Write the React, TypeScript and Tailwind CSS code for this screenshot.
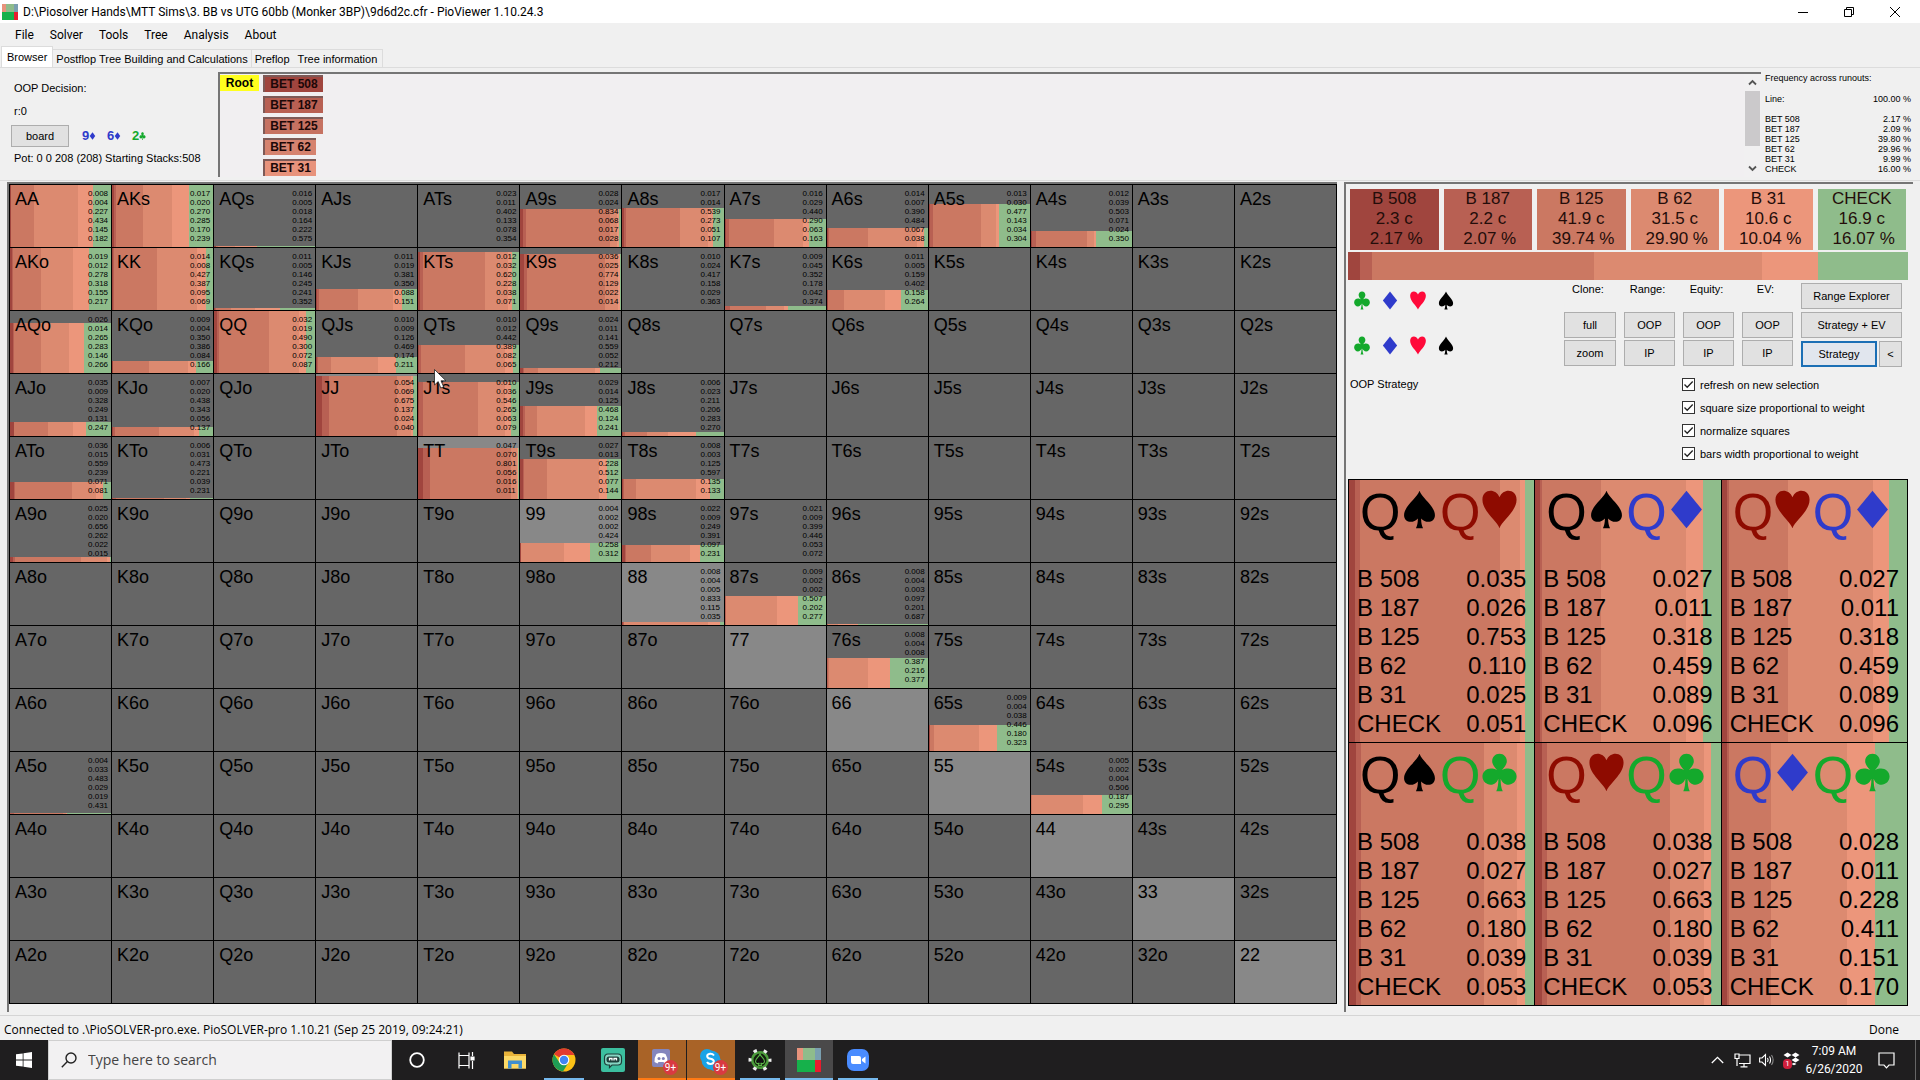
import React from "react";

type Suit = "s" | "h" | "d" | "c";

const RANKS = ["A", "K", "Q", "J", "T", "9", "8", "7", "6", "5", "4", "3", "2"];

const ACTIONS = [
  { name: "B 508", combos: "2.3 c", pct: "2.17 %", bg: "bg-[#a0453e]" },
  { name: "B 187", combos: "2.2 c", pct: "2.07 %", bg: "bg-[#b86053]" },
  { name: "B 125", combos: "41.9 c", pct: "39.74 %", bg: "bg-[#cb7862]" },
  { name: "B 62", combos: "31.5 c", pct: "29.90 %", bg: "bg-[#dc8a70]" },
  { name: "B 31", combos: "10.6 c", pct: "10.04 %", bg: "bg-[#ec967b]" },
  { name: "CHECK", combos: "16.9 c", pct: "16.07 %", bg: "bg-[#8fbc8b]" },
];

/* hand: [bar height in percent of the square, frequencies per action] */
const HANDS: Record<string, [number, string]> = {
  AA: [100, "0.008 0.004 0.227 0.434 0.145 0.182"],
  AKs: [100, "0.017 0.020 0.270 0.285 0.170 0.239"],
  AQs: [2, "0.016 0.005 0.018 0.164 0.222 0.575"],
  ATs: [0, "0.023 0.011 0.402 0.133 0.078 0.354"],
  A9s: [62, "0.028 0.024 0.834 0.068 0.017 0.028"],
  A8s: [63, "0.017 0.014 0.539 0.273 0.051 0.107"],
  A7s: [45, "0.016 0.029 0.440 0.290 0.063 0.163"],
  A6s: [31, "0.014 0.007 0.390 0.484 0.067 0.038"],
  A5s: [69, "0.013 0.030 0.477 0.143 0.034 0.304"],
  A4s: [26, "0.012 0.039 0.503 0.071 0.024 0.350"],
  AKo: [100, "0.019 0.012 0.278 0.318 0.155 0.217"],
  KK: [100, "0.014 0.008 0.427 0.387 0.095 0.069"],
  KQs: [4, "0.011 0.005 0.146 0.245 0.241 0.352"],
  KJs: [34, "0.011 0.019 0.381 0.350 0.088 0.151"],
  KTs: [94, "0.012 0.032 0.620 0.228 0.038 0.071"],
  K9s: [90, "0.036 0.025 0.774 0.129 0.022 0.014"],
  K8s: [0, "0.010 0.024 0.417 0.158 0.029 0.363"],
  K7s: [7, "0.009 0.045 0.352 0.178 0.042 0.374"],
  K6s: [32, "0.011 0.005 0.159 0.402 0.158 0.264"],
  AQo: [80, "0.026 0.014 0.265 0.283 0.146 0.266"],
  KQo: [19, "0.009 0.004 0.350 0.386 0.084 0.166"],
  QQ: [100, "0.032 0.019 0.490 0.300 0.072 0.087"],
  QJs: [26, "0.010 0.009 0.126 0.469 0.174 0.211"],
  QTs: [45, "0.010 0.012 0.442 0.389 0.082 0.065"],
  Q9s: [8, "0.024 0.011 0.141 0.559 0.052 0.212"],
  AJo: [23, "0.035 0.009 0.328 0.249 0.131 0.247"],
  KJo: [15, "0.007 0.020 0.438 0.343 0.056 0.137"],
  JJ: [97, "0.054 0.069 0.675 0.137 0.024 0.040"],
  JTs: [87, "0.010 0.036 0.546 0.265 0.063 0.079"],
  J9s: [48, "0.029 0.014 0.125 0.468 0.124 0.241"],
  J8s: [6, "0.006 0.023 0.211 0.206 0.283 0.270"],
  ATo: [27, "0.036 0.015 0.559 0.239 0.071 0.081"],
  KTo: [2, "0.006 0.031 0.473 0.221 0.039 0.231"],
  TT: [82, "0.047 0.070 0.801 0.056 0.016 0.011"],
  T9s: [65, "0.027 0.013 0.228 0.512 0.077 0.144"],
  T8s: [32, "0.008 0.003 0.125 0.597 0.135 0.133"],
  A9o: [8, "0.025 0.020 0.656 0.262 0.022 0.015"],
  "99": [31, "0.004 0.002 0.002 0.424 0.258 0.312"],
  "98s": [27, "0.022 0.009 0.249 0.391 0.097 0.231"],
  "97s": [0, "0.021 0.009 0.399 0.446 0.053 0.072"],
  "88": [5, "0.008 0.004 0.005 0.833 0.115 0.035"],
  "87s": [47, "0.009 0.002 0.002 0.507 0.202 0.277"],
  "86s": [2, "0.008 0.004 0.003 0.097 0.201 0.687"],
  "76s": [48, "0.008 0.004 0.008 0.387 0.216 0.377"],
  "65s": [42, "0.009 0.004 0.038 0.446 0.180 0.323"],
  "54s": [31, "0.005 0.002 0.004 0.506 0.187 0.295"],
  A5o: [2, "0.004 0.033 0.483 0.029 0.019 0.431"],
};

const COMBOS: { cards: [Suit, Suit]; freqs: string }[] = [
  { cards: ["s", "h"], freqs: "0.035 0.026 0.753 0.110 0.025 0.051" },
  { cards: ["s", "d"], freqs: "0.027 0.011 0.318 0.459 0.089 0.096" },
  { cards: ["h", "d"], freqs: "0.027 0.011 0.318 0.459 0.089 0.096" },
  { cards: ["s", "c"], freqs: "0.038 0.027 0.663 0.180 0.039 0.053" },
  { cards: ["h", "c"], freqs: "0.038 0.027 0.663 0.180 0.039 0.053" },
  { cards: ["d", "c"], freqs: "0.028 0.011 0.228 0.411 0.151 0.170" },
];

const SUIT_PATHS: Record<Suit, string> = {
  s: "M12 0.5C13.5 5 21.5 10 21.5 15.5C21.5 20 16 21 13 17.5C13 20 13.4 22 14.2 23.5H9.8C10.6 22 11 20 11 17.5C8 21 2.500 20 2.500 15.5C2.500 10 10.500 5 12 0.500Z",
  h: "M12 23.500C10.500 19 1.500 13 1.500 6C1.500 -0.500 9.500 -1.500 12 4.500C14.500 -1.500 22.500 -0.500 22.500 6C22.500 13 13.500 19 12 23.500Z",
  d: "M12 0.5L21.5 12L12 23.5L2.5 12Z",
  c: "M12 0.5C14.700 0.500 16.500 2.500 16.500 5C16.500 7 15.200 8.500 13.500 10.500C15 9.700 16 9.500 17.300 9.500C20 9.500 22.500 11.500 22.500 14.500C22.500 17.500 20 19.500 17.500 19.500C15 19.500 13.600 18 12.700 15.800C12.700 19 13 21.500 14 23.500H10C11 21.500 11.300 19 11.300 15.800C10.400 18 9 19.500 6.500 19.500C4 19.500 1.500 17.500 1.500 14.500C1.500 11.500 4 9.500 6.700 9.500C8 9.500 9 9.700 10.500 10.500C8.800 8.500 7.500 7 7.500 5C7.500 2.500 9.300 0.500 12 0.500Z",
};

function SuitIcon({ suit, className }: { suit: Suit; className: string }) {
  return (
    <svg viewBox="0 0 24 24" preserveAspectRatio="none" className={className} fill="currentColor" aria-hidden="true">
      <path d={SUIT_PATHS[suit]} />
    </svg>
  );
}

function Bars({ freqs }: { freqs: string[] }) {
  return (
    <div className="flex h-full w-full">
      {freqs.map((f, i) => (
        <div key={i} className={ACTIONS[i].bg} style={{ flexGrow: Number(f) * 1000, flexBasis: 0 }} />
      ))}
    </div>
  );
}

function Pointer() {
  return (
    <svg viewBox="0 0 13 20" className="absolute top-[58px] left-4 z-10 h-5 w-[13px]" aria-hidden="true">
      <path d="M0.500 0.500V16L4.200 12.600L6.800 19L9.600 17.800L7 11.800H12Z" fill="#fff" stroke="#222" strokeWidth="0.800" />
    </svg>
  );
}

function HandCell({ row, col }: { row: number; col: number }) {
  const pair = row === col;
  const hand = pair
    ? RANKS[row] + RANKS[row]
    : col > row
      ? RANKS[row] + RANKS[col] + "s"
      : RANKS[col] + RANKS[row] + "o";
  const data = HANDS[hand];
  const freqs = data ? data[1].split(" ") : [];
  return (
    <div className={`relative border-t border-l border-black ${pair ? "bg-[#888888]" : "bg-[#666666]"}`}>
      {data && (
        <div className="absolute inset-x-0 bottom-0" style={{ height: `${data[0]}%` }}>
          <Bars freqs={freqs} />
        </div>
      )}
      <div className="relative flex justify-between pr-[3px] pl-[5px]">
        <span className="pt-1 text-[18px] leading-5 text-black">{hand}</span>
        {data && (
          <div className="flex flex-col pt-1 text-[8px] leading-[9px] text-black">
            {freqs.map((f, i) => (
              <span key={i}>{f}</span>
            ))}
          </div>
        )}
      </div>
      {hand === "QTs" && <Pointer />}
    </div>
  );
}

const SUIT_TEXT: Record<Suit, string> = {
  s: "text-black",
  h: "text-[#8e0b00]",
  d: "text-[#2f3bcb]",
  c: "text-[#14a92c]",
};

function ComboCell({ cards, freqs }: { cards: [Suit, Suit]; freqs: string }) {
  const list = freqs.split(" ");
  return (
    <div className="relative border-t border-l border-black">
      <div className="absolute inset-0">
        <Bars freqs={list} />
      </div>
      <div className="relative flex h-[84px] items-start pt-[6px] pl-[11px]">
        {cards.map((s) => (
          <div key={s} className={`flex w-20 items-start ${SUIT_TEXT[s]}`}>
            <span className="text-[52px] leading-[52px]">Q</span>
            <SuitIcon suit={s} className="mt-1 h-[39px] w-[39px] shrink-0" />
          </div>
        ))}
      </div>
      <table className="relative w-full text-[24px] leading-[29px] text-black">
        <tbody>
          {list.map((f, i) => (
            <tr key={i}>
              <th scope="row" className="p-0 pl-2 text-left font-normal">{ACTIONS[i].name}</th>
              <td className="p-0 pr-2 text-right">{f}</td>
            </tr>
          ))}
        </tbody>
      </table>
    </div>
  );
}

function Btn({ children, className = "" }: { children: React.ReactNode; className?: string }) {
  return (
    <button type="button" className={`h-[26px] border border-[#adadad] bg-[#e1e1e1] text-center leading-4 ${className}`}>
      {children}
    </button>
  );
}

function ButtonColumn({ label, top, bottom, width }: { label: string; top: string; bottom: string; width: string }) {
  return (
    <div className={`flex flex-col gap-[2px] ${width}`}>
      <span className="h-[27px] pr-1 text-center leading-3">{label}</span>
      <Btn>{top}</Btn>
      <Btn>{bottom}</Btn>
    </div>
  );
}

function Check({ id, label }: { id: string; label: string }) {
  return (
    <div className="flex h-[23px] items-center gap-[5px]">
      <span className="relative h-[13px] w-[13px]">
        <input
          id={id}
          type="checkbox"
          defaultChecked
          className="peer block h-[13px] w-[13px] appearance-none border border-[#333] bg-white"
        />
        <svg viewBox="0 0 13 13" className="pointer-events-none absolute inset-0 hidden peer-checked:block" aria-hidden="true">
          <path d="M2.500 6.500L5.200 9.300L10.700 3.500" fill="none" stroke="#222" strokeWidth="1.300" />
        </svg>
      </span>
      <label htmlFor={id} className="leading-4">{label}</label>
    </div>
  );
}

function PioLogo({ className }: { className: string }) {
  return (
    <svg viewBox="0 0 16 16" preserveAspectRatio="none" className={className} aria-hidden="true">
      <rect width="5" height="8" fill="#e8937c" />
      <rect x="4" width="9" height="8" fill="#8fbc8b" />
      <rect x="12" width="4" height="8" fill="#7a9fb0" />
      <rect y="8" width="12" height="8" fill="#16b14b" />
      <rect x="12" y="8" width="4" height="8" fill="#e81c2e" />
    </svg>
  );
}

function TitleBar() {
  return (
    <header className="flex h-[23px] items-center justify-between bg-white pl-[2px]">
      <div className="flex items-center gap-[5px]">
        <PioLogo className="h-4 w-4" />
        <h1 className="text-[12px] leading-4">
          D:\Piosolver Hands\MTT Sims\3. BB vs UTG 60bb (Monker 3BP)\9d6d2c.cfr - PioViewer 1.10.24.3
        </h1>
      </div>
      <div className="flex">
        <button type="button" aria-label="Minimize" className="flex h-5 w-[46px] items-center justify-center">
          <svg viewBox="0 0 10 10" className="h-[10px] w-[10px]"><path d="M0 5.500H10" stroke="#000" /></svg>
        </button>
        <button type="button" aria-label="Restore" className="flex h-5 w-[46px] items-center justify-center">
          <svg viewBox="0 0 10 10" className="h-[10px] w-[10px]" fill="none" stroke="#000">
            <path d="M0.500 2.500H7.500V9.500H0.500ZM2.500 2.500V0.500H9.500V7.500H7.500" />
          </svg>
        </button>
        <button type="button" aria-label="Close" className="mr-[2px] flex h-5 w-[46px] items-center justify-center">
          <svg viewBox="0 0 10 10" className="h-[10px] w-[10px]"><path d="M0 0L10 10M10 0L0 10" stroke="#000" /></svg>
        </button>
      </div>
    </header>
  );
}

function MenuBar() {
  return (
    <nav className="flex h-6 items-center pl-[7px] text-[12px]">
      {["File", "Solver", "Tools", "Tree", "Analysis", "About"].map((m) => (
        <button key={m} type="button" className="px-2 leading-5">{m}</button>
      ))}
    </nav>
  );
}

function Tabs() {
  return (
    <div role="tablist" className="flex h-[21px] items-end border-b border-[#dcdcdc] pl-[1px]">
      <button role="tab" aria-selected="true" type="button" className="h-[21px] border-x border-t border-[#dcdcdc] bg-white px-[5px] leading-4">
        Browser
      </button>
      <button role="tab" aria-selected="false" type="button" className="h-[18px] border-t border-r border-[#dcdcdc] px-[3px] leading-4">
        Postflop Tree Building and Calculations
      </button>
      <button role="tab" aria-selected="false" type="button" className="h-[18px] border-t border-[#dcdcdc] px-[3px] leading-4">
        Preflop
      </button>
      <button role="tab" aria-selected="false" type="button" className="h-[18px] border-t border-r border-[#dcdcdc] px-[5px] leading-4">
        Tree information
      </button>
    </div>
  );
}

function DecisionPanel() {
  const board: [string, Suit][] = [["9", "d"], ["6", "d"], ["2", "c"]];
  return (
    <section className="flex w-[210px] shrink-0 flex-col pt-2 pl-[6px]">
      <p className="leading-4">OOP Decision:</p>
      <p className="mt-[7px] leading-4">r:0</p>
      <div className="mt-[6px] -ml-[3px] flex items-center">
        <button type="button" className="mr-[13px] h-[22px] w-[58px] border border-[#adadad] bg-[#e1e1e1] leading-4">board</button>
        {board.map(([r, s]) => (
          <span key={r} className={`flex w-[25px] items-center text-[13px] leading-4 font-bold ${SUIT_TEXT[s]}`}>
            {r}
            <SuitIcon suit={s} className="h-[8px] w-[7px]" />
          </span>
        ))}
      </div>
      <p className="mt-[3px] leading-4 whitespace-nowrap">Pot: 0 0 208 (208) Starting Stacks:508</p>
    </section>
  );
}

function TreePanel() {
  const bets: [string, string][] = [
    ["BET 508", "w-[60px] bg-[#a0453e]"],
    ["BET 187", "w-[60px] bg-[#b86053]"],
    ["BET 125", "w-[60px] bg-[#c67262]"],
    ["BET 62", "w-[53px] bg-[#d6836f]"],
    ["BET 31", "w-[53px] bg-[#e8937c]"],
  ];
  return (
    <section className="flex min-w-0 flex-1 border-t-2 border-l-2 border-[#757575] bg-[#f1eff1] text-[12px] font-bold">
      <div className="flex flex-1 gap-1 pt-[1px]">
        <button type="button" className="h-4 w-[39px] bg-[#ffff1e] leading-4">Root</button>
        <div className="flex flex-col gap-1">
          {bets.map(([label, cls]) => (
            <button key={label} type="button" className={`h-[17px] border-t-2 border-l-2 border-[#7d5a57] text-center leading-[15px] text-[#1c0808] ${cls}`}>
              {label}
            </button>
          ))}
        </div>
      </div>
      <div className="flex w-[17px] flex-col items-center bg-[#f1f0f1]">
        <svg viewBox="0 0 17 17" className="h-[17px] w-[17px]"><path d="M5 10.500L8.500 7L12 10.500" fill="none" stroke="#555" strokeWidth="1.800" /></svg>
        <div className="h-[55px] w-[15px] bg-[#cbc9cb]" />
        <div className="flex-1" />
        <svg viewBox="0 0 17 17" className="h-[17px] w-[17px]"><path d="M5 6.500L8.500 10L12 6.500" fill="none" stroke="#555" strokeWidth="1.800" /></svg>
      </div>
    </section>
  );
}

function FrequencyPanel() {
  const rows = [
    ["BET 508", "2.17 %"],
    ["BET 187", "2.09 %"],
    ["BET 125", "39.80 %"],
    ["BET 62", "29.96 %"],
    ["BET 31", "9.99 %"],
    ["CHECK", "16.00 %"],
  ];
  return (
    <section className="w-[159px] shrink-0 pt-[1px] pr-[9px] pl-1 text-[9px] leading-[11px]">
      <h2>Frequency across runouts:</h2>
      <table className="mt-[10px] w-full">
        <tbody>
          <tr>
            <th scope="row" className="p-0 pb-[9px] text-left font-normal">Line:</th>
            <td className="p-0 pb-[9px] text-right">100.00 %</td>
          </tr>
          {rows.map(([k, v]) => (
            <tr key={k} className="leading-[10px]">
              <th scope="row" className="p-0 text-left font-normal">{k}</th>
              <td className="p-0 text-right">{v}</td>
            </tr>
          ))}
        </tbody>
      </table>
    </section>
  );
}

function SuitRow() {
  return (
    <div className="flex gap-[10px]">
      {(["c", "d", "h", "s"] as Suit[]).map((s) => (
        <button key={s} type="button" aria-label={s} className={s === "h" ? "text-[#ff0a3a]" : SUIT_TEXT[s]}>
          <SuitIcon suit={s} className="h-[19px] w-[18px]" />
        </button>
      ))}
    </div>
  );
}

function StrategyPanel() {
  return (
    <section className="flex w-[569px] shrink-0 flex-col border-t-2 border-l-2 border-[#757575] pt-[5px] pr-[5px] pl-[2px]">
      <div className="grid grid-cols-6 gap-x-[5px] px-[2px]">
        {ACTIONS.map((a) => (
          <div key={a.name} className={`flex h-[61px] flex-col items-center text-[17px] leading-5 text-[#240d0a] ${a.bg}`}>
            <span>{a.name}</span>
            <span>{a.combos}</span>
            <span className="pl-1">{a.pct}</span>
          </div>
        ))}
      </div>
      <div className="mt-[2px] h-7">
        <Bars freqs={["0.0217", "0.0207", "0.3974", "0.2990", "0.1004", "0.1607"]} />
      </div>
      <div className="mt-[3px] flex justify-between pr-[6px] pl-[5px]">
        <div className="flex flex-col gap-[26px] pt-2">
          <SuitRow />
          <SuitRow />
        </div>
        <div className="flex gap-2">
          <ButtonColumn label="Clone:" top="full" bottom="zoom" width="w-[52px]" />
          <ButtonColumn label="Range:" top="OOP" bottom="IP" width="w-[51px]" />
          <ButtonColumn label="Equity:" top="OOP" bottom="IP" width="w-[51px]" />
          <ButtonColumn label="EV:" top="OOP" bottom="IP" width="w-[51px]" />
          <div className="flex w-[101px] flex-col gap-[3px]">
            <Btn>Range Explorer</Btn>
            <Btn>Strategy + EV</Btn>
            <div className="flex gap-[2px]">
              <button type="button" className="h-[26px] flex-1 border-2 border-[#1b6fb5] bg-[#e1e6ee] leading-4">Strategy</button>
              <Btn className="w-[23px]">&lt;</Btn>
            </div>
          </div>
        </div>
      </div>
      <div className="mt-[6px] flex justify-between pr-[58px] pl-[2px]">
        <p className="pt-[3px] leading-4">OOP Strategy</p>
        <div className="flex w-[168px] flex-col whitespace-nowrap">
          <Check id="refresh" label="refresh on new selection" />
          <Check id="square" label="square size proportional to weight" />
          <Check id="normalize" label="normalize squares" />
          <Check id="bars" label="bars width proportional to weight" />
        </div>
      </div>
      <div className="mt-[14px] mb-[6px] grid flex-1 grid-cols-3 grid-rows-2 border-r border-b border-black">
        {COMBOS.map((c) => (
          <ComboCell key={c.cards.join("")} {...c} />
        ))}
      </div>
    </section>
  );
}

function TaskButton({ label, tint = "", line = "", children }: { label: string; tint?: string; line?: string; children: React.ReactNode }) {
  return (
    <button type="button" aria-label={label} className={`flex h-10 w-12 flex-col items-center ${tint}`}>
      <span className="flex flex-1 items-center justify-center pt-[2px]">{children}</span>
      <span className={`h-[2px] ${line}`} />
    </button>
  );
}

function Badge() {
  return (
    <span className="absolute right-[-5px] bottom-[-3px] flex h-[15px] w-[15px] items-center justify-center rounded-full bg-[#d93a41] text-[10px] leading-3 text-white">
      9+
    </span>
  );
}

function Taskbar() {
  return (
    <footer className="flex h-10 items-center bg-[#1f1e1f] text-white">
      <button type="button" aria-label="Start" className="flex h-10 w-12 items-center justify-center">
        <svg viewBox="0 0 16 16" className="h-4 w-4" fill="#fff">
          <path d="M0 2.300L6.700 1.400V7.600H0ZM7.500 1.300L16 0V7.600H7.500ZM0 8.400H6.700V14.600L0 13.700ZM7.500 8.400H16V16L7.500 14.700Z" />
        </svg>
      </button>
      <div className="flex h-10 w-[344px] items-center gap-[11px] border border-[#cfcfcf] bg-[#f2f1f2] pl-3">
        <svg viewBox="0 0 16 16" className="h-4 w-4" fill="none" stroke="#222" strokeWidth="1.400">
          <circle cx="10" cy="6" r="5" />
          <path d="M6.400 9.600L0.800 15.200" />
        </svg>
        <input
          type="text"
          aria-label="Search"
          placeholder="Type here to search"
          className="w-60 bg-transparent font-['Open_Sans','Noto_Sans',sans-serif] text-[14px] leading-5 text-[#333] placeholder-[#444] outline-none"
        />
      </div>
      <div className="flex gap-[1px] pl-[1px]">
        <TaskButton label="Cortana">
          <svg viewBox="0 0 16 16" className="h-4 w-4"><circle cx="8" cy="8" r="6.800" fill="none" stroke="#fff" strokeWidth="1.800" /></svg>
        </TaskButton>
        <TaskButton label="Task view">
          <svg viewBox="0 0 17 17" className="h-[17px] w-[17px]" fill="none" stroke="#fff" strokeWidth="1.200">
            <path d="M1 0.500V3.500H11V0.500M1 16.500V13.500H11V16.500M1 3.500V13.500M11 3.500V13.500M14.500 0V4M14.500 9V17" />
            <path d="M13 5H16V8H13Z" fill="#fff" />
          </svg>
        </TaskButton>
        <TaskButton label="File Explorer">
          <svg viewBox="0 0 22 18" className="h-[18px] w-[22px]">
            <path d="M0 0.500H8L10 3H22V17.500H0Z" fill="#e8b33a" />
            <path d="M0 5H22V17.500H0Z" fill="#fcd966" />
            <path d="M4 9.500H18V17.500H14.500V13H7.500V17.500H4Z" fill="#3f8fd0" />
          </svg>
        </TaskButton>
        <TaskButton label="Chrome" line="w-10 bg-[#76b9ed]">
          <svg viewBox="0 0 24 24" className="h-6 w-6">
            <circle cx="12" cy="12" r="11.500" fill="#fbc116" />
            <path d="M12 12L2 6.300A11.500 11.500 0 0 1 22 6.300L22.500 7H12Z" fill="#e33b2e" />
            <path d="M2 6.300A11.500 11.500 0 0 0 11 23.500L16.500 14.500L7.500 14.500Z" fill="#1f9d55" />
            <circle cx="12" cy="12" r="5.300" fill="#fff" />
            <circle cx="12" cy="12" r="4.200" fill="#4285f4" />
          </svg>
        </TaskButton>
        <TaskButton label="Streamlabs">
          <svg viewBox="0 0 24 24" className="h-6 w-6">
            <rect width="24" height="24" rx="2" fill="#3cbf9f" />
            <path d="M7 6H17Q20.500 6 20.500 10V13.500Q20.500 17 17 17H11L8.500 19.500V17H7Q3.500 17 3.500 13.500V10Q3.500 6 7 6Z" fill="#86d6c3" stroke="#1d3f3a" strokeWidth="1.200" />
            <rect x="5.500" y="8.500" width="13" height="6" rx="2.500" fill="#1d3f3a" />
            <path d="M8.500 12.500V10.500H11V12.500M13 12.500V10.500H15.500V12.500" fill="none" stroke="#fff" strokeWidth="1.300" />
          </svg>
        </TaskButton>
        <TaskButton label="Discord" tint="bg-[#a96327]" line="w-12 bg-[#ff7a14]">
          <span className="relative">
            <svg viewBox="0 0 22 24" className="h-6 w-[22px]">
              <path d="M3 1H17Q19 1 19 3V23L15 19H3Q1 19 1 17V3Q1 1 3 1Z" fill="#8486bd" />
              <path d="M5.500 6Q10 4 14.500 6Q17 10 16.500 14L13.500 15.500L12.500 14H7.500L6.500 15.500L3.500 14Q3 10 5.500 6Z" fill="#fff" />
              <circle cx="8" cy="10.500" r="1.500" fill="#7d80b8" />
              <circle cx="12.300" cy="10.500" r="1.500" fill="#7d80b8" />
            </svg>
            <Badge />
          </span>
        </TaskButton>
        <TaskButton label="Skype" tint="bg-[#a96327]" line="w-12 bg-[#ff7a14]">
          <span className="relative">
            <svg viewBox="0 0 24 24" className="h-6 w-6">
              <circle cx="8" cy="8" r="7" fill="#1aa3e6" />
              <circle cx="16" cy="16" r="7" fill="#1aa3e6" />
              <circle cx="12" cy="12" r="9.500" fill="#1aa3e6" />
              <path d="M15 7.500Q13.500 5.500 11 5.800Q8 6.200 8.200 8.300Q8.500 10.300 11.500 10.800Q15 11.500 14.800 13.700Q14.500 16 11.500 16Q9 16 8 14" fill="none" stroke="#fff" strokeWidth="2" />
            </svg>
            <Badge />
          </span>
        </TaskButton>
        <TaskButton label="Poker tool" line="w-10 bg-[#76b9ed]">
          <svg viewBox="0 0 24 24" className="h-6 w-6">
            <circle cx="12" cy="12" r="7.800" fill="#14200f" stroke="#4c9c3c" strokeWidth="2.600" />
            <circle cx="12" cy="12" r="10" fill="none" stroke="#eee" strokeWidth="3" strokeDasharray="3.500 6.970" strokeDashoffset="1.750" />
            <path d="M12 6C13 9 16.500 10.500 16.500 13.300C16.500 15.800 14 16.200 12.800 14.800L13.500 17.500H10.500L11.200 14.800C10 16.200 7.500 15.800 7.500 13.300C7.500 10.500 11 9 12 6Z" fill="#111" stroke="#5cb848" strokeWidth="1.100" />
          </svg>
        </TaskButton>
        <TaskButton label="PioViewer" tint="bg-[#4a494a]" line="w-12 bg-[#76b9ed]">
          <PioLogo className="h-6 w-6" />
        </TaskButton>
        <TaskButton label="Zoom" line="w-10 bg-[#76b9ed]">
          <svg viewBox="0 0 24 24" className="h-6 w-6">
            <rect x="1" y="1" width="22" height="22" rx="7" fill="#4a8cff" />
            <path d="M5 8H13Q15 8 15 10V16H7Q5 16 5 14ZM16 11L19.500 8.500V15.500L16 13Z" fill="#fff" />
          </svg>
        </TaskButton>
      </div>
      <div className="ml-auto flex items-center">
        <svg viewBox="0 0 13 8" className="h-2 w-[13px]"><path d="M0.800 7L6.500 1.300L12.200 7" fill="none" stroke="#fff" strokeWidth="1.300" /></svg>
        <svg viewBox="0 0 17 15" className="ml-[10px] h-[15px] w-[17px]" fill="none" stroke="#fff" strokeWidth="1.200">
          <path d="M5 2H16V10.500H5M10 10.500V13.500M6.500 13.800H13.500M1 1H5V5.500H1ZM3 5.500V13" />
        </svg>
        <svg viewBox="0 0 16 14" className="ml-2 h-[14px] w-4" fill="none" stroke="#fff" strokeWidth="1.100">
          <path d="M0.600 5H3L6.500 1.500V12.500L3 9H0.600ZM8.500 5Q9.800 7 8.500 9M10.500 3.500Q12.600 7 10.500 10.500" />
          <path d="M12.500 2Q15.800 7 12.500 12" stroke="#888" />
        </svg>
        <span className="relative ml-2 h-[17px] w-[17px]">
          <svg viewBox="0 0 17 17" className="h-[17px] w-[17px]" fill="#fff">
            <path d="M0.500 3L4.500 0.500L8.500 3L4.500 5.500ZM8.500 3L12.500 0.500L16.500 3L12.500 5.500ZM8.500 8L12.500 5.500L16.500 8L12.500 10.500ZM8.500 12L11 13.300L13.500 12L11 10.700Z" />
          </svg>
          <span className="absolute bottom-0 left-0 h-[10px] w-[9px] rounded-sm bg-[#d01f3c] text-center text-[8px] leading-[10px]">1</span>
        </span>
        <div className="ml-1 flex w-[60px] flex-col items-center text-[12px] leading-[18px]">
          <span>7:09 AM</span>
          <span>6/26/2020</span>
        </div>
        <svg viewBox="0 0 17 17" className="mr-5 ml-[14px] h-[17px] w-[17px]" fill="none" stroke="#fff" strokeWidth="1.200">
          <path d="M1 1H16V13H11L8.500 15.800L6 13H1Z" />
        </svg>
        <span className="h-10 w-[5px] border-l border-[#666]" />
      </div>
    </footer>
  );
}

export default function App() {
  return (
    <div className="flex min-h-screen flex-col bg-[#f0f0f0] font-['Roboto','Noto_Sans',sans-serif] text-black">
      <TitleBar />
      <MenuBar />
      <main className="flex flex-1 flex-col font-['Liberation_Sans',Arial,sans-serif] text-[11px]">
        <Tabs />
        <div className="flex h-[109px] pt-1 pl-2">
          <DecisionPanel />
          <TreePanel />
          <FrequencyPanel />
        </div>
        <div className="mt-[3px] flex flex-1 gap-[7px] border-t border-[#dcdcdc] pt-[1px] pr-[7px] pl-[7px]">
          <section className="flex min-w-0 flex-1 flex-col border-t-2 border-l-2 border-[#757575] pb-2">
            <div className="grid flex-1 grid-cols-13 grid-rows-13 border-r border-b border-black">
              {RANKS.map((_, r) => RANKS.map((__, c) => <HandCell key={`${r}-${c}`} row={r} col={c} />))}
            </div>
          </section>
          <StrategyPanel />
        </div>
      </main>
      <div className="mt-[3px] flex h-[25px] items-center justify-between border-t border-[#d5d5d5] pt-1 pr-[21px] pl-1 font-['Open_Sans','Noto_Sans',sans-serif] text-[12px]">
        <span>Connected to .\PioSOLVER-pro.exe. PioSOLVER-pro 1.10.21 (Sep 25 2019, 09:24:21)</span>
        <span>Done</span>
      </div>
      <Taskbar />
    </div>
  );
}
